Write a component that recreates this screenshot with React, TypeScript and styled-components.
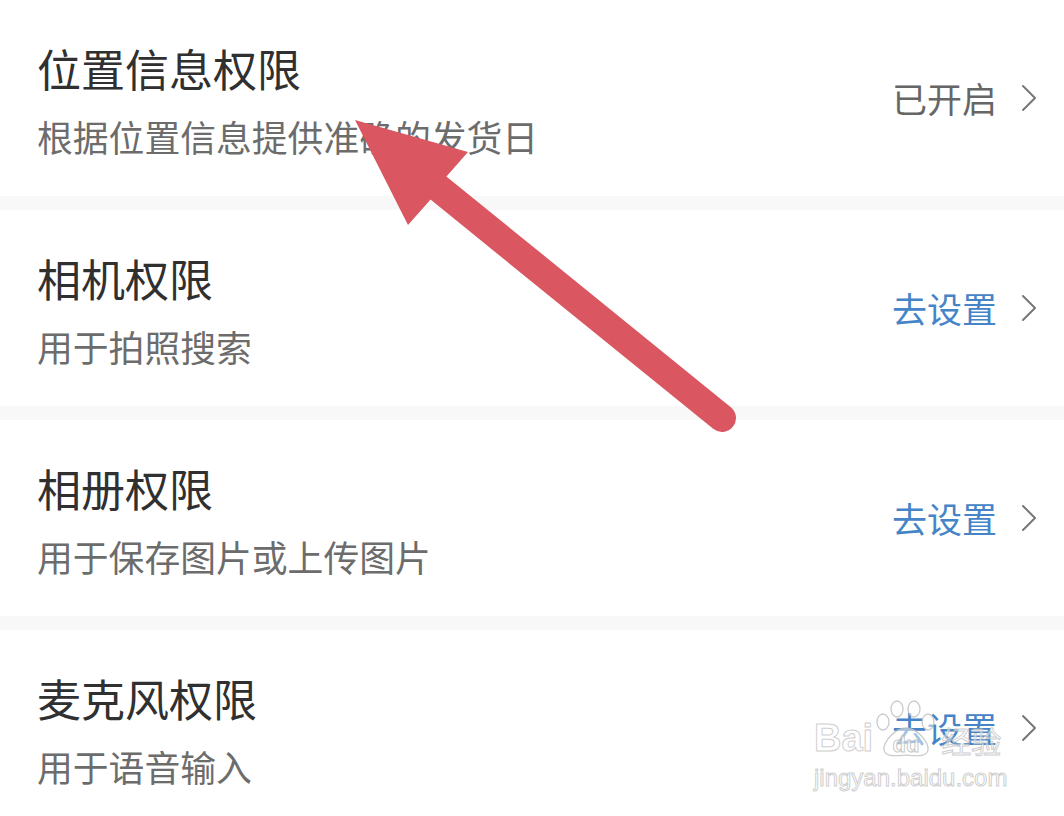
import React from 'react';
import styled, { createGlobalStyle } from 'styled-components';

const GlobalStyle = createGlobalStyle`
  html, body {
    margin: 0;
    padding: 0;
    background: #ffffff;
    overflow: hidden;
  }
  body {
    font-family: "Noto Sans CJK SC", "Noto Sans", sans-serif;
  }
`;

const Page = styled.div`
  position: relative;
  width: 1064px;
  height: 816px;
  overflow: hidden;
  background: #f8f8f8;
  display: flex;
  flex-direction: column;
  gap: 14px;
`;

const Row = styled.div`
  flex: 0 0 196px;
  box-sizing: border-box;
  background: #ffffff;
  display: flex;
  align-items: center;
  padding: 0 27px 0 37px;
`;

const TextCol = styled.div`
  flex: 1;
  align-self: flex-start;
  padding-top: 40px;
  display: flex;
  flex-direction: column;
  gap: 18px;
`;

const Title = styled.div`
  font-size: 44px;
  line-height: 56px;
  color: #303030;
`;

const Subtitle = styled.div`
  font-size: 35.8px;
  line-height: 44px;
  color: #6c6c6c;
`;

const Action = styled.div<{ $active?: boolean }>`
  display: flex;
  align-items: center;
  gap: 24px;
  font-size: 35px;
  line-height: 44px;
  color: ${p => (p.$active ? '#4584c6' : '#666666')};
`;

const Chevron = styled.svg`
  width: 16px;
  height: 28px;
  display: block;
`;

const Overlay = styled.svg`
  position: absolute;
  left: 0;
  top: 0;
  pointer-events: none;
`;

const Watermark = styled.div`
  position: absolute;
  left: 814px;
  top: 700px;
  display: flex;
  flex-direction: column;
  align-items: flex-start;
  pointer-events: none;
  font-family: "Liberation Sans", Arial, sans-serif;
  color: rgba(255, 255, 255, 0.5);
  -webkit-text-stroke: 1px rgba(185, 185, 185, 0.7);
`;

const MarkTop = styled.div`
  display: flex;
  align-items: flex-end;
  font-size: 38px;
  line-height: 44px;
  font-weight: 700;
`;

const MarkCn = styled.span`
  font-family: "Noto Sans CJK SC", sans-serif;
  font-size: 30px;
  line-height: 40px;
  font-weight: 400;
  margin-left: 2px;
`;

const MarkUrl = styled.div`
  font-size: 24px;
  line-height: 28px;
  margin-top: 4px;
`;

const items = [
  { title: '位置信息权限', desc: '根据位置信息提供准确的发货日', action: '已开启', active: false },
  { title: '相机权限', desc: '用于拍照搜索', action: '去设置', active: true },
  { title: '相册权限', desc: '用于保存图片或上传图片', action: '去设置', active: true },
  { title: '麦克风权限', desc: '用于语音输入', action: '去设置', active: true },
];

const Arrow: React.FC = () => (
  <Overlay width="1064" height="816" viewBox="0 0 1064 816">
    <line x1="436" y1="186" x2="722" y2="418" stroke="#da5660" strokeWidth="28" strokeLinecap="round" />
    <polygon points="355,120 468,152 446,177 431,199 408,225" fill="#da5660" />
  </Overlay>
);

// baidu paw with "du" inside
const Paw: React.FC = () => (
  <svg width="66" height="58" viewBox="0 0 66 58" style={{ marginBottom: 2 }}>
    <g fill="rgba(255,255,255,0.5)" stroke="rgba(185,185,185,0.75)" strokeWidth="1.3">
      <ellipse cx="10" cy="22" rx="6" ry="8" />
      <ellipse cx="24" cy="9" rx="6" ry="8" />
      <ellipse cx="41" cy="9" rx="6" ry="8" />
      <ellipse cx="55" cy="22" rx="6" ry="8" />
      <path d="M33 28 C22 28 10 42 11 50 C12 57 22 56 33 55 C44 56 54 57 55 50 C56 42 44 28 33 28 Z" />
    </g>
    <text x="33" y="52" textAnchor="middle" fontFamily="Liberation Sans, Arial, sans-serif" fontSize="22" fontWeight="700" fill="rgba(255,255,255,0.6)" stroke="rgba(185,185,185,0.8)" strokeWidth="1">du</text>
  </svg>
);

const App: React.FC = () => (
  <>
    <GlobalStyle />
    <Page>
      {items.map(item => (
        <Row key={item.title}>
          <TextCol>
            <Title>{item.title}</Title>
            <Subtitle>{item.desc}</Subtitle>
          </TextCol>
          <Action $active={item.active}>
            {item.action}
            <Chevron viewBox="0 0 16 28">
              <polyline points="2,2 14,14 2,26" fill="none" stroke="#777777" strokeWidth="2" strokeLinecap="round" strokeLinejoin="round" />
            </Chevron>
          </Action>
        </Row>
      ))}
      <Arrow />
      <Watermark>
        <MarkTop>
          Bai
          <Paw />
          <MarkCn>经验</MarkCn>
        </MarkTop>
        <MarkUrl>jingyan.baidu.com</MarkUrl>
      </Watermark>
    </Page>
  </>
);

export default App;
